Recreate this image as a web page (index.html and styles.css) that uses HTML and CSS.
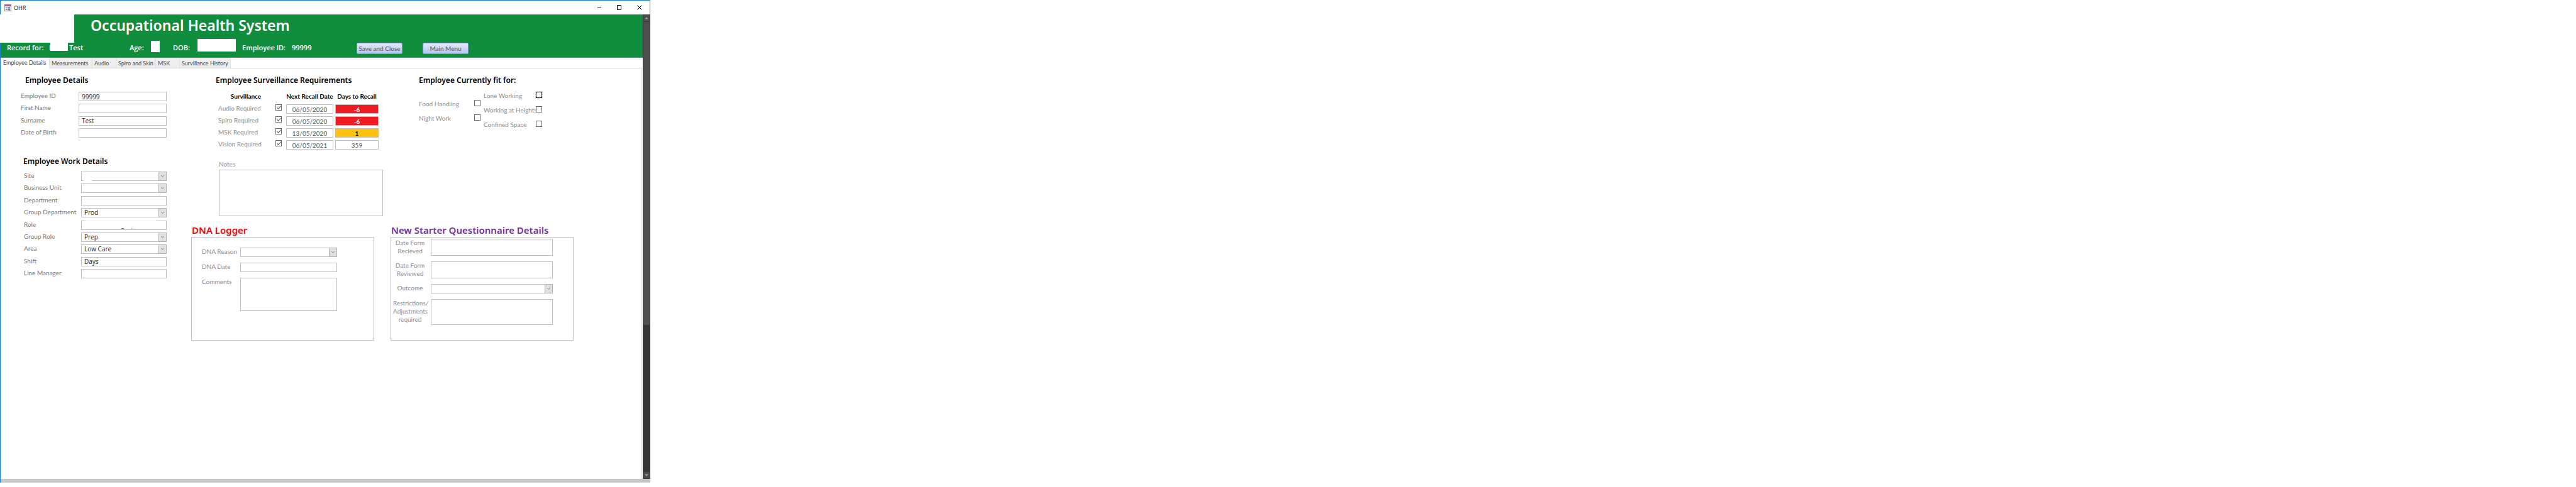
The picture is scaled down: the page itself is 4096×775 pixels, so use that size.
FILE: index.html
```html
<!DOCTYPE html>
<html lang="en">
<head>
<meta charset="utf-8">
<title>OHR</title>
<link rel="stylesheet" href="styles.css">
</head>
<body>
<svg class="defs" aria-hidden="true">
  <symbol id="chevron" viewBox="0 0 12 13"><path d="M3.5 5 L6 7.5 L8.500 5" fill="none" stroke="#777" stroke-width="1"/></symbol>
</svg>
<div class="window">
  <div class="titlebar">
    <svg class="app-icon" viewBox="0 0 11 11" aria-hidden="true">
      <rect width="11" height="11" fill="#8f9bbd"/><rect x="1" y="3" width="9" height="7" fill="#dfe5f3"/>
      <rect width="11" height="3" fill="#c2527f"/>
      <path d="M2 5.500h3M2 8.500h3" stroke="#5d6f9e"/><rect x="6" y="4.500" width="3" height="2" fill="#5d6f9e"/><rect x="6" y="7.500" width="3" height="2" fill="#5d6f9e"/>
    </svg>
    <span class="app-name">OHR</span>
    <div class="window-buttons">
      <button type="button" aria-label="Minimize"><svg viewBox="0 0 8 8"><path d="M1 4.500h6" stroke="#000"/></svg></button>
      <button type="button" aria-label="Maximize"><svg viewBox="0 0 8 8"><path d="M.5 .5h6v7h-6z" fill="none" stroke="#000"/></svg></button>
      <button type="button" aria-label="Close"><svg viewBox="0 0 8 8"><path d="M.5 .5l7 7M7.500 .5l-7 7" stroke="#000"/></svg></button>
    </div>
  </div>
  <div class="body">
    <div class="content">
      <header class="banner">
        <div class="banner-top">
          <div class="logo"></div>
          <h1>Occupational Health System</h1>
        </div>
        <div class="record">
          <span>Record for:</span>
          <span class="first-name">L<i class="mask"></i></span>
          <span>Test</span>
          <span>Age:</span>
          <span class="blank blank-age"></span>
          <span>DOB:</span>
          <span class="blank blank-dob"></span>
          <span>Employee ID:</span>
          <span>99999</span>
          <button type="button">Save and Close</button>
          <button type="button">Main Menu</button>
        </div>
      </header>
      <nav class="tabs">
        <button type="button" class="tab active">Employee Details</button>
        <button type="button" class="tab tab-measure">Measurements</button>
        <button type="button" class="tab tab-short">Audio</button>
        <button type="button" class="tab tab-spiro">Spiro and Skin</button>
        <button type="button" class="tab tab-short">MSK</button>
        <button type="button" class="tab tab-history">Survillance History</button>
        <span class="tab-rest"></span>
      </nav>
      <main class="panel">
        <div class="side">
          <section class="employee">
            <h2>Employee Details</h2>
            <div class="fields">
              <label for="eid">Employee ID</label><input id="eid" value="99999">
              <label for="fn">First Name</label><input id="fn">
              <label for="sn">Surname</label><input id="sn" value="Test">
              <label for="dob">Date of Birth</label><input id="dob">
            </div>
          </section>
          <section class="work">
            <h2>Employee Work Details</h2>
            <div class="fields">
              <label for="site">Site</label><div class="combo"><select id="site"><option></option></select><svg><use href="#chevron"/></svg><i class="mask-site"></i></div>
              <label for="bu">Business Unit</label><div class="combo"><select id="bu"><option></option></select><svg><use href="#chevron"/></svg></div>
              <label for="dept">Department</label><input id="dept">
              <label for="gd">Group Department</label><div class="combo"><select id="gd"><option>Prod</option></select><svg><use href="#chevron"/></svg></div>
              <label for="role">Role</label><div class="combo"><input id="role"><i class="mask-role"></i><i class="trace"></i></div>
              <label for="gr">Group Role</label><div class="combo"><select id="gr"><option>Prep</option></select><svg><use href="#chevron"/></svg></div>
              <label for="area">Area</label><div class="combo"><select id="area"><option>Low Care</option></select><svg><use href="#chevron"/></svg></div>
              <label for="shift">Shift</label><input id="shift" value="Days">
              <label for="lm">Line Manager</label><input id="lm">
            </div>
          </section>
        </div>
        <div class="health">
          <div class="health-top">
            <section class="surveillance">
              <h2>Employee Surveillance Requirements</h2>
              <table>
                <thead><tr><th class="c-name">Survillance</th><th class="c-check"></th><th class="c-date">Next Recall Date</th><th class="c-days">Days to Recall</th></tr></thead>
                <tbody>
                  <tr><td><label for="r1">Audio Required</label></td><td><input type="checkbox" id="r1" checked></td><td class="c-date"><input aria-label="Audio recall date" value="06/05/2020"></td><td><input class="late" aria-label="Audio days" value="-6"></td></tr>
                  <tr><td><label for="r2">Spiro Required</label></td><td><input type="checkbox" id="r2" checked></td><td class="c-date"><input aria-label="Spiro recall date" value="06/05/2020"></td><td><input class="late" aria-label="Spiro days" value="-6"></td></tr>
                  <tr><td><label for="r3">MSK Required</label></td><td><input type="checkbox" id="r3" checked></td><td class="c-date"><input aria-label="MSK recall date" value="13/05/2020"></td><td><input class="due" aria-label="MSK days" value="1"></td></tr>
                  <tr><td><label for="r4">Vision Required</label></td><td><input type="checkbox" id="r4" checked></td><td class="c-date"><input aria-label="Vision recall date" value="06/05/2021"></td><td><input aria-label="Vision days" value="359"></td></tr>
                </tbody>
              </table>
              <div class="notes"><label for="notes">Notes</label><textarea id="notes"></textarea></div>
            </section>
            <section class="fit">
              <h2>Employee Currently fit for:</h2>
              <div class="fit-cols">
                <div class="fit-col fit-left">
                  <div><label for="f1">Food Handling</label><input type="checkbox" id="f1"></div>
                  <div><label for="f2">Night Work</label><input type="checkbox" id="f2"></div>
                </div>
                <div class="fit-col fit-right">
                  <div><label for="f3">Lone Working</label><input type="checkbox" id="f3" class="current"></div>
                  <div><label for="f4">Working at Heights</label><input type="checkbox" id="f4"></div>
                  <div><label for="f5">Confined Space</label><input type="checkbox" id="f5"></div>
                </div>
              </div>
            </section>
          </div>
          <div class="health-bottom">
            <section class="dna">
              <h3>DNA Logger</h3>
              <div class="box">
                <label for="dr">DNA Reason</label><div class="combo"><select id="dr"><option></option></select><svg><use href="#chevron"/></svg></div>
                <label for="dd">DNA Date</label><input id="dd">
                <label for="dc">Comments</label><textarea id="dc"></textarea>
              </div>
            </section>
            <section class="starter">
              <h3>New Starter Questionnaire Details</h3>
              <div class="box">
                <label for="q1">Date Form Recieved</label><textarea id="q1"></textarea>
                <label for="q2">Date Form Reviewed</label><textarea id="q2"></textarea>
                <label for="q3">Outcome</label><div class="combo"><select id="q3"><option></option></select><svg><use href="#chevron"/></svg></div>
                <label for="q4">Restrictions/ Adjustments required</label><textarea id="q4" class="tall"></textarea>
              </div>
            </section>
          </div>
        </div>
      </main>
    </div>
    <div class="scrollbar">
      <span class="arrow"><svg viewBox="0 0 10 10"><path d="M2 6.500L5 3l3 3.500z" fill="#999"/></svg></span>
      <span class="thumb"></span>
      <span class="track"></span>
      <span class="arrow"><svg viewBox="0 0 10 10"><path d="M2 3.500L5 7l3-3.500z" fill="#999"/></svg></span>
    </div>
  </div>
  <div class="statusbar"></div>
</div>
</body>
</html>
```

FILE: styles.css
```css
* { box-sizing: border-box; }
body { margin: 0; background: #fff; font: 10px/13px Lato, sans-serif; color: #222; }
button, input, select, textarea { font: inherit; color: inherit; margin: 0; border-radius: 0; }
h1, h2, h3 { margin: 0; font-family: "Noto Sans", sans-serif; font-weight: 600; white-space: nowrap; }
label { color: #8c8c8c; white-space: nowrap; }
.defs { position: absolute; width: 0; height: 0; }

.window { width: 25.25%; min-height: calc(100vh - 7px); display: flex; flex-direction: column; border-left: 1px solid #1a7fd4; }

.titlebar { height: 23px; display: flex; align-items: center; border-top: 1px solid #1a7fd4; border-right: 1px solid #1a7fd4; padding-left: 6px; }
.app-icon { width: 11px; height: 11px; }
.app-name { margin-left: 4px; font: 9px/13px "Open Sans", sans-serif; color: #000; }
.window-buttons { margin-left: auto; display: flex; gap: 24px; padding-right: 12px; }
.window-buttons button { width: 8px; height: 8px; padding: 0; border: 0; background: none; display: block; }
.window-buttons svg { display: block; width: 8px; height: 8px; }

.body { flex: 1; display: flex; }
.content { flex: 1; min-width: 0; display: flex; flex-direction: column; }

.banner { background: #0f8d3d; border-bottom: 1px solid #37a05e; color: #fff; height: 69px; }
.banner-top { display: flex; align-items: flex-start; }
.logo { width: 118px; height: 45px; margin-left: -1px; background: #fff; }
h1 { margin-left: 26px; font-size: 23px; line-height: 34px; }
.record { display: grid; grid-template-columns: 67px 32px 96px 34px 35px 39px 71px 79px 103px 105px 1fr; padding-left: 10px; font: 600 11px/16px "Open Sans", sans-serif; align-items: start; white-space: nowrap; }
.first-name { position: relative; }
.mask { position: absolute; left: 2px; top: 0; width: 28px; height: 13px; background: #fff; }
.blank { background: #fff; }
.blank-age { width: 14px; height: 18px; margin-top: -3px; }
.blank-dob { width: 61px; height: 20px; margin-top: -6px; }
.record button { width: 73px; height: 18px; padding: 0; border: 1px solid #7f9bd0; border-radius: 2px; background: linear-gradient(#e3eafb, #b3c5f2); color: #555; font: 10px/13px Lato, sans-serif; }

.tabs { display: flex; height: 17px; font-size: 9px; }
.tab { border: 1px solid #e0e0e0; border-left: 0; background: #efefef; padding: 0 3px; text-align: left; color: #444; white-space: nowrap; }
.tab.active { width: 78px; border-color: #fff #e0e0e0 #fff #fff; background: #fff; padding: 0 4px 2px; }
.tab-short { width: 38px; }
.tab-measure { width: 68px; }
.tab-spiro { width: 63px; }
.tab-history { width: 81px; }
.tab-rest { flex: 1; border-bottom: 1px solid #e0e0e0; margin-right: 1px; }

.panel { flex: 1; display: flex; margin-right: 1px; border-right: 1px solid #e0e0e0; padding-top: 11px; }
h2 { font-size: 12px; line-height: 16px; color: #000; }
h3 { font-size: 15px; line-height: 20px; }

input, select, textarea { display: block; width: 100%; height: 15px; padding: 0 4px; border: 1px solid #bfbfc3; background: #fff; appearance: none; outline: 0; }
textarea { resize: none; }
.combo { position: relative; }
.combo svg { position: absolute; right: 0; top: 0; width: 13px; height: 15px; background: #e0e0e0; border: 1px solid #b3b3b6; pointer-events: none; }

.side { width: 303px; }
.side label { color: #777; }
.side input, .side select { font-family: "Open Sans", sans-serif; }
.fields { display: grid; align-content: space-between; }
.employee h2 { padding-left: 39px; }
.employee .fields { margin: 10px 0 30px 32px; grid-template-columns: 92px 140px; min-height: 73px; }
.work h2 { padding-left: 36px; }
.work .fields { margin: 8px 0 0 37px; grid-template-columns: 91px 136px; min-height: 170px; }
.mask-site { position: absolute; left: 4px; bottom: 0; width: 13px; height: 1px; background: #fff; }
.mask-role { position: absolute; left: 7px; top: 0; width: 112px; height: 1px; background: #f2f2f2; }
.trace { position: absolute; left: 64px; bottom: 2px; width: 17px; height: 1px; border: solid #777; border-width: 0 1px 0 4px; }

.health { flex: 1; min-width: 0; }
.health-top { display: flex; }
.surveillance { width: 362px; padding-left: 39px; }
table { table-layout: fixed; width: 255px; margin: 7px 0 0 4px; border-collapse: separate; border-spacing: 0 4px; }
th, td { padding: 0; height: 15px; vertical-align: top; text-align: left; }
th { text-align: center; color: #000; font-weight: 700; white-space: nowrap; }
.c-name { width: 91px; padding-right: 3px; }
.c-check { width: 17px; }
.c-date { width: 78px; padding-right: 3px; }
td input { text-align: center; color: #555; }
td .late { background: #ed1c24; color: #fff; font-weight: 700; }
td .due { background: #ffc20e; color: #000; font-weight: 700; }
input[type="checkbox"] { width: 10px; height: 10px; padding: 0; border-color: #666; flex: none; }
input[type="checkbox"]:checked::after { content: ""; display: block; width: 6px; height: 3px; margin: 1px; border: solid #555; border-width: 0 0 1px 1px; transform: rotate(-45deg); }
.notes { width: 266px; padding: 10px 0 0 5px; }
.notes label { display: block; line-height: 18px; }
.notes textarea { height: 74px; }

.fit-cols { display: flex; gap: 5px; margin-top: 10px; }
.fit-col { display: flex; flex-direction: column; gap: 10px; }
.fit-col div { display: flex; justify-content: space-between; align-items: flex-start; }
.fit-left { width: 98px; padding-top: 13px; }
.fit-right { width: 93px; }
.fit-right label { width: 80px; }
.fit .current { border: 1px dashed #000; outline: 1px solid #ddd; }

.health-bottom { display: flex; gap: 26px; margin-top: 12px; }
.box { display: grid; align-content: start; height: 165px; width: 291px; border: 1px solid #bfbfc3; margin-top: 1px; }
.dna h3 { color: #f00; padding-left: 1px; }
.dna .box { grid-template-columns: 61px 154px; row-gap: 9px; padding: 16px 0 0 16px; }
.dna textarea { height: 53px; }
.starter h3 { color: #7030a0; padding-left: 1px; }
.starter .box { grid-template-columns: 54px 194px; column-gap: 6px; row-gap: 9px; padding: 2px 0 0 3px; }
.starter label { white-space: normal; text-align: center; }
.starter textarea { height: 27px; }
.starter .tall { height: 41px; }

.scrollbar { width: 12px; background: #363636; display: flex; flex-direction: column; padding: 1px; gap: 1px; }
.arrow { height: 10px; background: #4d4d4d; }
.arrow svg { display: block; width: 10px; height: 10px; }
.thumb { flex: 483; background: #4f4f4f; }
.track { flex: 232; }
.statusbar { height: 6px; background: #c5c6ca; }
```
